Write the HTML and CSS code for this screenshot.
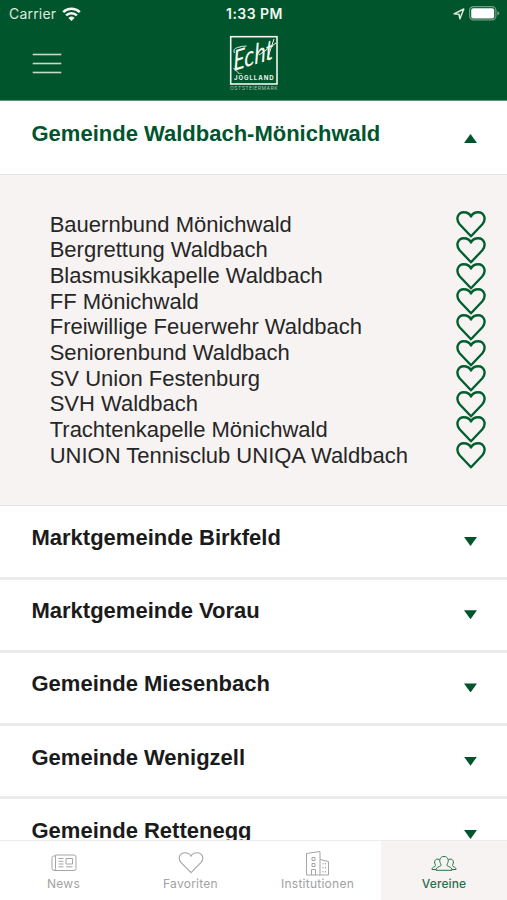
FILE: index.html
```html
<!DOCTYPE html>
<html lang="de">
<head>
<meta charset="utf-8">
<title>Vereine</title>
<link rel="stylesheet" href="styles.css">
</head>
<body>
<svg width="0" height="0" class="defs">
  <symbol id="heart" viewBox="0 0 30 28"><path d="M15 26.300 3.600 14.200C-.9 8.700 2.300 2.200 7.700 2.200c3.100 0 5.900 1 7.300 4.300 1.400-3.300 4.200-4.300 7.300-4.300 5.400 0 8.600 6.500 4.100 12Z"/></symbol>
</svg>
<div class="app">
  <header class="top">
    <div class="status">
      <div class="carrier"><span>Carrier</span>
        <svg width="19" height="14" viewBox="0 0 19 14"><g fill="none" stroke="#f4f9f3" stroke-width="2.500"><path d="M1.200 5.100a12 12 0 0 1 16.600 0"/><path d="M4.100 8.400a7.700 7.700 0 0 1 10.800 0"/></g><path d="M6.400 11a4.600 4.600 0 0 1 6.200 0L9.500 14Z" fill="#f4f9f3"/></svg>
      </div>
      <div class="clock">1:33 PM</div>
      <div class="power">
        <svg width="12" height="12" viewBox="0 0 12 12"><path d="M1 5.800 10.800 1 6.900 10.800 6 6.200Z" fill="none" stroke="#dcebdc" stroke-width="1.500" stroke-linejoin="round"/></svg>
        <svg width="31" height="15" viewBox="0 0 31 15"><rect x=".6" y=".6" width="26.300" height="13.300" rx="4" fill="none" stroke="#6fa086" stroke-width="1.200"/><rect x="2.200" y="2.200" width="23" height="10.200" rx="2" fill="#fff"/><path d="M28.300 5v4.600q2-.8 2-2.300t-2-2.300" fill="#6fa086"/></svg>
      </div>
    </div>
    <div class="bar">
      <div class="menu"><i></i><i></i><i></i></div>
      <svg class="logo" width="50" height="56" viewBox="0 0 50 56">
        <rect x="1.700" y="1.700" width="46.300" height="47.300" fill="none" stroke="#eef6ee" stroke-width="1.600"/>
        <text class="script" transform="translate(4.500 36) rotate(-17) skewX(-16) scale(.84 1)" x="0" y="0">Echt</text>
        <path d="M5.500 18q-2-4 3-5.500t9-1.500M4.500 33q3 3 6 6M30 20 47 8M45 4 38 25" fill="none" stroke="#e6f1e6" stroke-width="1"/>
        <text class="name" x="5" y="45.200" textLength="39.500">JÖGLLAND</text>
        <text class="region" x="1" y="54.800" textLength="47.500">OSTSTEIERMARK</text>
      </svg>
    </div>
  </header>
  <main>
    <section class="group open"><h2>Gemeinde Waldbach-Mönichwald</h2><b class="up"></b></section>
    <ul>
      <li><span>Bauernbund Mönichwald</span><svg><use href="#heart"/></svg></li>
      <li><span>Bergrettung Waldbach</span><svg><use href="#heart"/></svg></li>
      <li><span>Blasmusikkapelle Waldbach</span><svg><use href="#heart"/></svg></li>
      <li><span>FF Mönichwald</span><svg><use href="#heart"/></svg></li>
      <li><span>Freiwillige Feuerwehr Waldbach</span><svg><use href="#heart"/></svg></li>
      <li><span>Seniorenbund Waldbach</span><svg><use href="#heart"/></svg></li>
      <li><span>SV Union Festenburg</span><svg><use href="#heart"/></svg></li>
      <li><span>SVH Waldbach</span><svg><use href="#heart"/></svg></li>
      <li><span>Trachtenkapelle Mönichwald</span><svg><use href="#heart"/></svg></li>
      <li><span>UNION Tennisclub UNIQA Waldbach</span><svg><use href="#heart"/></svg></li>
    </ul>
    <section class="group"><h2>Marktgemeinde Birkfeld</h2><b></b></section>
    <section class="group"><h2>Marktgemeinde Vorau</h2><b></b></section>
    <section class="group"><h2>Gemeinde Miesenbach</h2><b></b></section>
    <section class="group"><h2>Gemeinde Wenigzell</h2><b></b></section>
    <section class="group"><h2>Gemeinde Rettenegg</h2><b></b></section>
  </main>
  <nav>
    <a><svg width="26" height="26" viewBox="0 0 26 26"><path d="M4.500 5H23q2 0 2 2v11.500q0 2-2 2H3q-2 0-2-2V7.500Q1 6 2.500 6h2M4.500 5v13.500q0 2-1.500 2M7.500 8.500h5M7.500 11.300h5M7.500 14h5M7.500 16.800h5M15 16.800h6.500M15 8.500h6.500v5.500H15Z"/></svg><span>News</span></a>
    <a><svg class="fav" width="26" height="23" viewBox="0 0 30 28" preserveAspectRatio="none"><use href="#heart" width="30" height="28"/></svg><span>Favoriten</span></a>
    <a><svg width="26" height="26" viewBox="0 0 26 26"><path d="M1.500 25V3.500L15 1.500V25M15 9.500l8.500 2V25h-22M6.500 25v-5.500h4V25M7 7.500h3v3H7ZM7 13.500h3v3H7ZM18 13v1.500M20.500 13v1.500M18 17v1.500M20.500 17v1.500M18 21v1.500M20.500 21v1.500"/></svg><span>Institutionen</span></a>
    <a class="active"><svg width="26" height="26" viewBox="0 0 26 26"><path d="M5 20.300c0-2.300 1-2.800 3.500-3.800 2-.8 1.700-1.700 1-3C7.800 10.500 8.800 6.500 13 6.500s5.200 4 3.500 7c-.7 1.300-1 2.200 1 3 2.500 1 3.500 1.500 3.500 3.800ZM8 9.500C5.200 8.300 3.200 10.200 3.700 13c.4 2 1.500 2.600.2 3.500C1.500 17.500 1 18 1 19.500h4M18 9.500c2.800-1.200 4.800.7 4.300 3.500-.4 2-1.500 2.600-.2 3.500 2.400 1 2.900 1.500 2.900 3h-4"/></svg><span>Vereine</span></a>
  </nav>
</div>
</body>
</html>
```

FILE: styles.css
```css
* { box-sizing: border-box; }
body { margin: 0; background: #fff; font-family: "Liberation Sans", sans-serif; }
.defs { display: block; }
.app { height: 900px; display: flex; flex-direction: column; overflow: hidden; }
.top { flex: none; height: 101px; background: #00552d; border-bottom: 1px solid #629378; color: #f0f7ef; font-family: Inter, sans-serif; }
.status { height: 27px; display: grid; grid-template-columns: 1fr auto 1fr; align-items: center; padding: 0 7px 0 9px; }
.carrier { display: flex; align-items: center; gap: 6px; font-size: 14px; letter-spacing: .2px; color: #dcebdc; }
.clock { font-size: 14px; font-weight: 600; letter-spacing: .45px; }
.power { display: flex; justify-content: flex-end; align-items: center; gap: 4px; }
.bar { height: 73px; padding: 8px 32px 0; display: grid; grid-template-columns: 1fr 50px 1fr; }
.menu { width: 28px; margin-left: 1px; padding-top: 19px; display: flex; flex-direction: column; gap: 8px; }
.menu i { height: 1px; background: #c2dbc6; box-shadow: 0 0 0 .3px #c2dbc6; }
.logo { display: block; overflow: visible; }
.script { font: italic 400 27px Lato, sans-serif; fill: #f4faf2; }
.name { font: 700 6px Inter, sans-serif; fill: #eef6ee; }
.region { font: 400 5px Inter, sans-serif; fill: #a9c8b0; }
main { flex: 1; min-height: 0; overflow: hidden; }
.group { height: 73.250px; padding: 0 30px 0 31.500px; display: flex; justify-content: space-between; border-bottom: 3px solid #ebebeb; }
.group h2 { margin: 0; padding-top: 18.500px; font-size: 22px; line-height: 25px; font-weight: 700; color: #1b1b1b; white-space: nowrap; }
.group b { width: 13px; height: 9px; margin-top: 30.600px; background: #00552d; clip-path: polygon(0 0, 100% 0, 50% 100%); }
.group.open { height: 74px; border-bottom: 1px solid #e5e4e3; }
.group.open h2 { padding-top: 20px; color: #00552d; }
.group .up { margin-top: 33px; clip-path: polygon(0 100%, 100% 100%, 50% 0); }
ul { height: 331.400px; margin: 0; padding: 36.800px 21.500px 0 49.700px; list-style: none; background: #f7f3f2; border-bottom: 1px solid #e6e4e3; }
li { height: 25.650px; display: flex; justify-content: space-between; font-size: 22px; line-height: 25.650px; color: #262626; white-space: nowrap; }
li svg { width: 30px; height: 28px; margin-top: -1.500px; overflow: visible; fill: none; stroke: #00602f; stroke-width: 2.400; stroke-linejoin: round; }
nav { flex: none; height: 60px; display: grid; grid-template-columns: repeat(3, 127px) 1fr; border-top: 1px solid #ececec; background: #fff; }
nav a { display: flex; flex-direction: column; align-items: center; padding-top: 9px; color: #a2a2a2; font: 400 12px/16px Inter, sans-serif; letter-spacing: .25px; }
nav svg { fill: none; stroke: #a5a5a5; stroke-width: 1; stroke-linejoin: round; }
nav .fav { height: 23px; margin: 1px 0 2px; stroke-width: 1.300; }
nav .active { background: #f7f3f2; color: #27714c; font-weight: 500; letter-spacing: .1px; }
nav .active svg { stroke: #27714c; }
```
